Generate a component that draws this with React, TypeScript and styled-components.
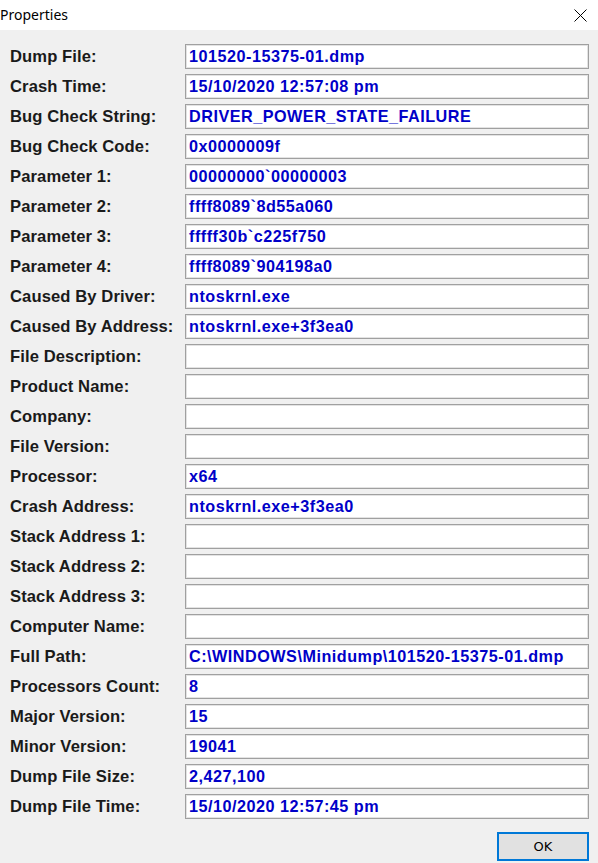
import React from "react";
import styled, { createGlobalStyle } from "styled-components";

const Global = createGlobalStyle`
  html, body { margin: 0; padding: 0; background: #f0f0f0; }
  * { box-sizing: border-box; }
`;

const Window = styled.div`
  width: 598px;
  height: 863px;
  background: #f0f0f0;
  display: flex;
  flex-direction: column;
  overflow: hidden;
`;

const TitleBar = styled.div`
  height: 30px;
  background: #ffffff;
  display: flex;
  align-items: center;
  justify-content: space-between;
  padding: 0 8px 0 0;
  font-family: "Noto Sans", "Open Sans", sans-serif;
  font-size: 14px;
  color: #000;
`;

const Title = styled.span`
  margin-top: -2px;
`;

const CloseButton = styled.div`
  width: 16px;
  height: 16px;
  display: flex;
  align-items: center;
  justify-content: center;
  margin-right: 2px;
`;

const Form = styled.div`
  display: grid;
  grid-template-columns: 175px 404px;
  row-gap: 5px;
  padding: 14px 0 0 10px;
`;

const Label = styled.div`
  height: 25px;
  display: flex;
  align-items: center;
  font-family: "Liberation Sans", Arial, sans-serif;
  font-weight: bold;
  font-size: 16.6px;
  letter-spacing: 0.1px;
  color: #1a1a1a;
  white-space: nowrap;
`;

const Field = styled.div`
  height: 25px;
  background: #fff;
  border: 1px solid #a0a0a0;
  box-shadow: inset 0 0 0 1px #e3e3e3;
  display: flex;
  align-items: center;
  padding: 0 0 0 3px;
  font-family: "Liberation Sans", Arial, sans-serif;
  font-weight: bold;
  font-size: 16.2px;
  letter-spacing: 0.5px;
  color: #0000c8;
  white-space: nowrap;
  overflow: hidden;
`;

const Footer = styled.div`
  display: flex;
  justify-content: flex-end;
  padding: 13px 9px 0 0;
`;

const OkButton = styled.button`
  width: 92px;
  height: 29px;
  background: #e1e1e1;
  border: 2px solid #0078d7;
  font-family: "DejaVu Sans", sans-serif;
  font-size: 13px;
  color: #000;
  padding: 0;
`;

const rows: [string, string][] = [
  ["Dump File:", "101520-15375-01.dmp"],
  ["Crash Time:", "15/10/2020 12:57:08 pm"],
  ["Bug Check String:", "DRIVER_POWER_STATE_FAILURE"],
  ["Bug Check Code:", "0x0000009f"],
  ["Parameter 1:", "00000000`00000003"],
  ["Parameter 2:", "ffff8089`8d55a060"],
  ["Parameter 3:", "fffff30b`c225f750"],
  ["Parameter 4:", "ffff8089`904198a0"],
  ["Caused By Driver:", "ntoskrnl.exe"],
  ["Caused By Address:", "ntoskrnl.exe+3f3ea0"],
  ["File Description:", ""],
  ["Product Name:", ""],
  ["Company:", ""],
  ["File Version:", ""],
  ["Processor:", "x64"],
  ["Crash Address:", "ntoskrnl.exe+3f3ea0"],
  ["Stack Address 1:", ""],
  ["Stack Address 2:", ""],
  ["Stack Address 3:", ""],
  ["Computer Name:", ""],
  ["Full Path:", "C:\\WINDOWS\\Minidump\\101520-15375-01.dmp"],
  ["Processors Count:", "8"],
  ["Major Version:", "15"],
  ["Minor Version:", "19041"],
  ["Dump File Size:", "2,427,100"],
  ["Dump File Time:", "15/10/2020 12:57:45 pm"],
];

export default function App() {
  return (
    <>
      <Global />
      <Window>
        <TitleBar>
          <Title>Properties</Title>
          <CloseButton>
            <svg width="13" height="13" viewBox="0 0 13 13">
              <path d="M0.5 0.5 L12.5 12.5 M12.5 0.5 L0.5 12.5" stroke="#000" strokeWidth="1" />
            </svg>
          </CloseButton>
        </TitleBar>
        <Form>
          {rows.map(([l, v]) => (
            <React.Fragment key={l}>
              <Label>{l}</Label>
              <Field>{v}</Field>
            </React.Fragment>
          ))}
        </Form>
        <Footer>
          <OkButton>OK</OkButton>
        </Footer>
      </Window>
    </>
  );
}
